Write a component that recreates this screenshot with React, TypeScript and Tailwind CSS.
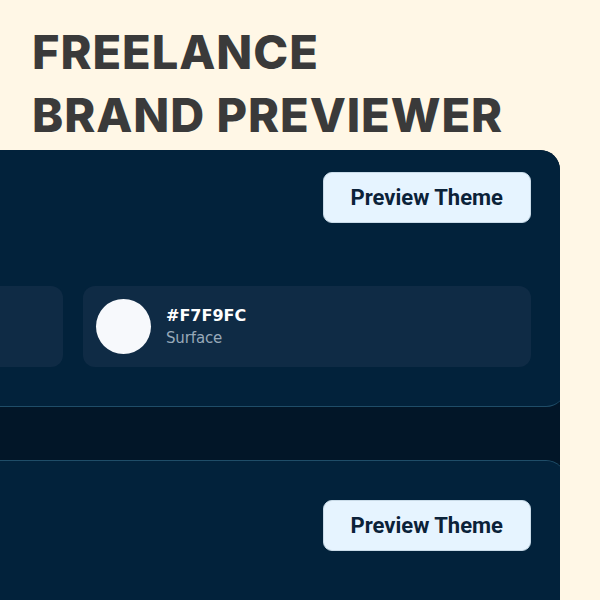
const swatches = [
  { hex: "#0B2239", label: "Primary" },
  { hex: "#F7F9FC", label: "Surface" },
];

function PreviewButton() {
  return (
    <button
      className="rounded-[9px] border border-[#c9dbe8] bg-[#e6f4ff] px-[27px] py-[11px] text-[22px] font-bold leading-[27px] text-[#0b2239]"
      style={{ fontFamily: "Roboto, 'Liberation Sans', sans-serif" }}
      type="button"
    >
      Preview Theme
    </button>
  );
}

function SwatchCard({ hex, label, showText = true }: { hex: string; label: string; showText?: boolean }) {
  return (
    <div className="flex items-center gap-[15px] rounded-[12px] bg-[#0f2b45] p-[13px]">
      <div className="h-[55px] w-[55px] shrink-0 rounded-full" style={{ backgroundColor: hex }} />
      {showText && (
        <div className="mt-[3px] flex flex-col" style={{ fontFamily: "'DejaVu Sans', sans-serif" }}>
          <span className="text-[16px] font-bold leading-[20px] text-white">{hex}</span>
          <span className="text-[15px] leading-[24px] tracking-[-0.01em] text-[#98a9b9]">{label}</span>
        </div>
      )}
    </div>
  );
}

export default function App() {
  return (
    <div className="h-[600px] w-[600px] overflow-hidden bg-[#fff7e6]">
      <h1
        className="px-[32px] pt-[20px] text-[47px] font-extrabold uppercase leading-[63px] tracking-[0.02em] text-[#3a3a3a]"
        style={{ fontFamily: "Inter, 'Liberation Sans', sans-serif" }}
      >
        Freelance
        <br />
        Brand Previewer
      </h1>

      <div className="ml-[-416px] mt-[4px] w-[976px] overflow-hidden rounded-tr-[20px] bg-[#021628]">
        <section className="mr-[-6px] rounded-b-[20px] border-b border-[#1f4d68] bg-[#02223b] px-[31px] pb-[39px] pt-[22px] pr-[35px]">
          <div className="flex justify-end">
            <PreviewButton />
          </div>
          <div className="mt-[63px] grid grid-cols-2 gap-[20px]">
            <SwatchCard hex={swatches[0].hex} label={swatches[0].label} showText={false} />
            <SwatchCard hex={swatches[1].hex} label={swatches[1].label} />
          </div>
        </section>

        <div className="h-[53px]" />

        <section className="mr-[-6px] h-[200px] rounded-t-[20px] border-t border-[#1f4d68] bg-[#02223b] px-[31px] pt-[39px] pr-[35px]">
          <div className="flex justify-end">
            <PreviewButton />
          </div>
        </section>
      </div>
    </div>
  );
}
